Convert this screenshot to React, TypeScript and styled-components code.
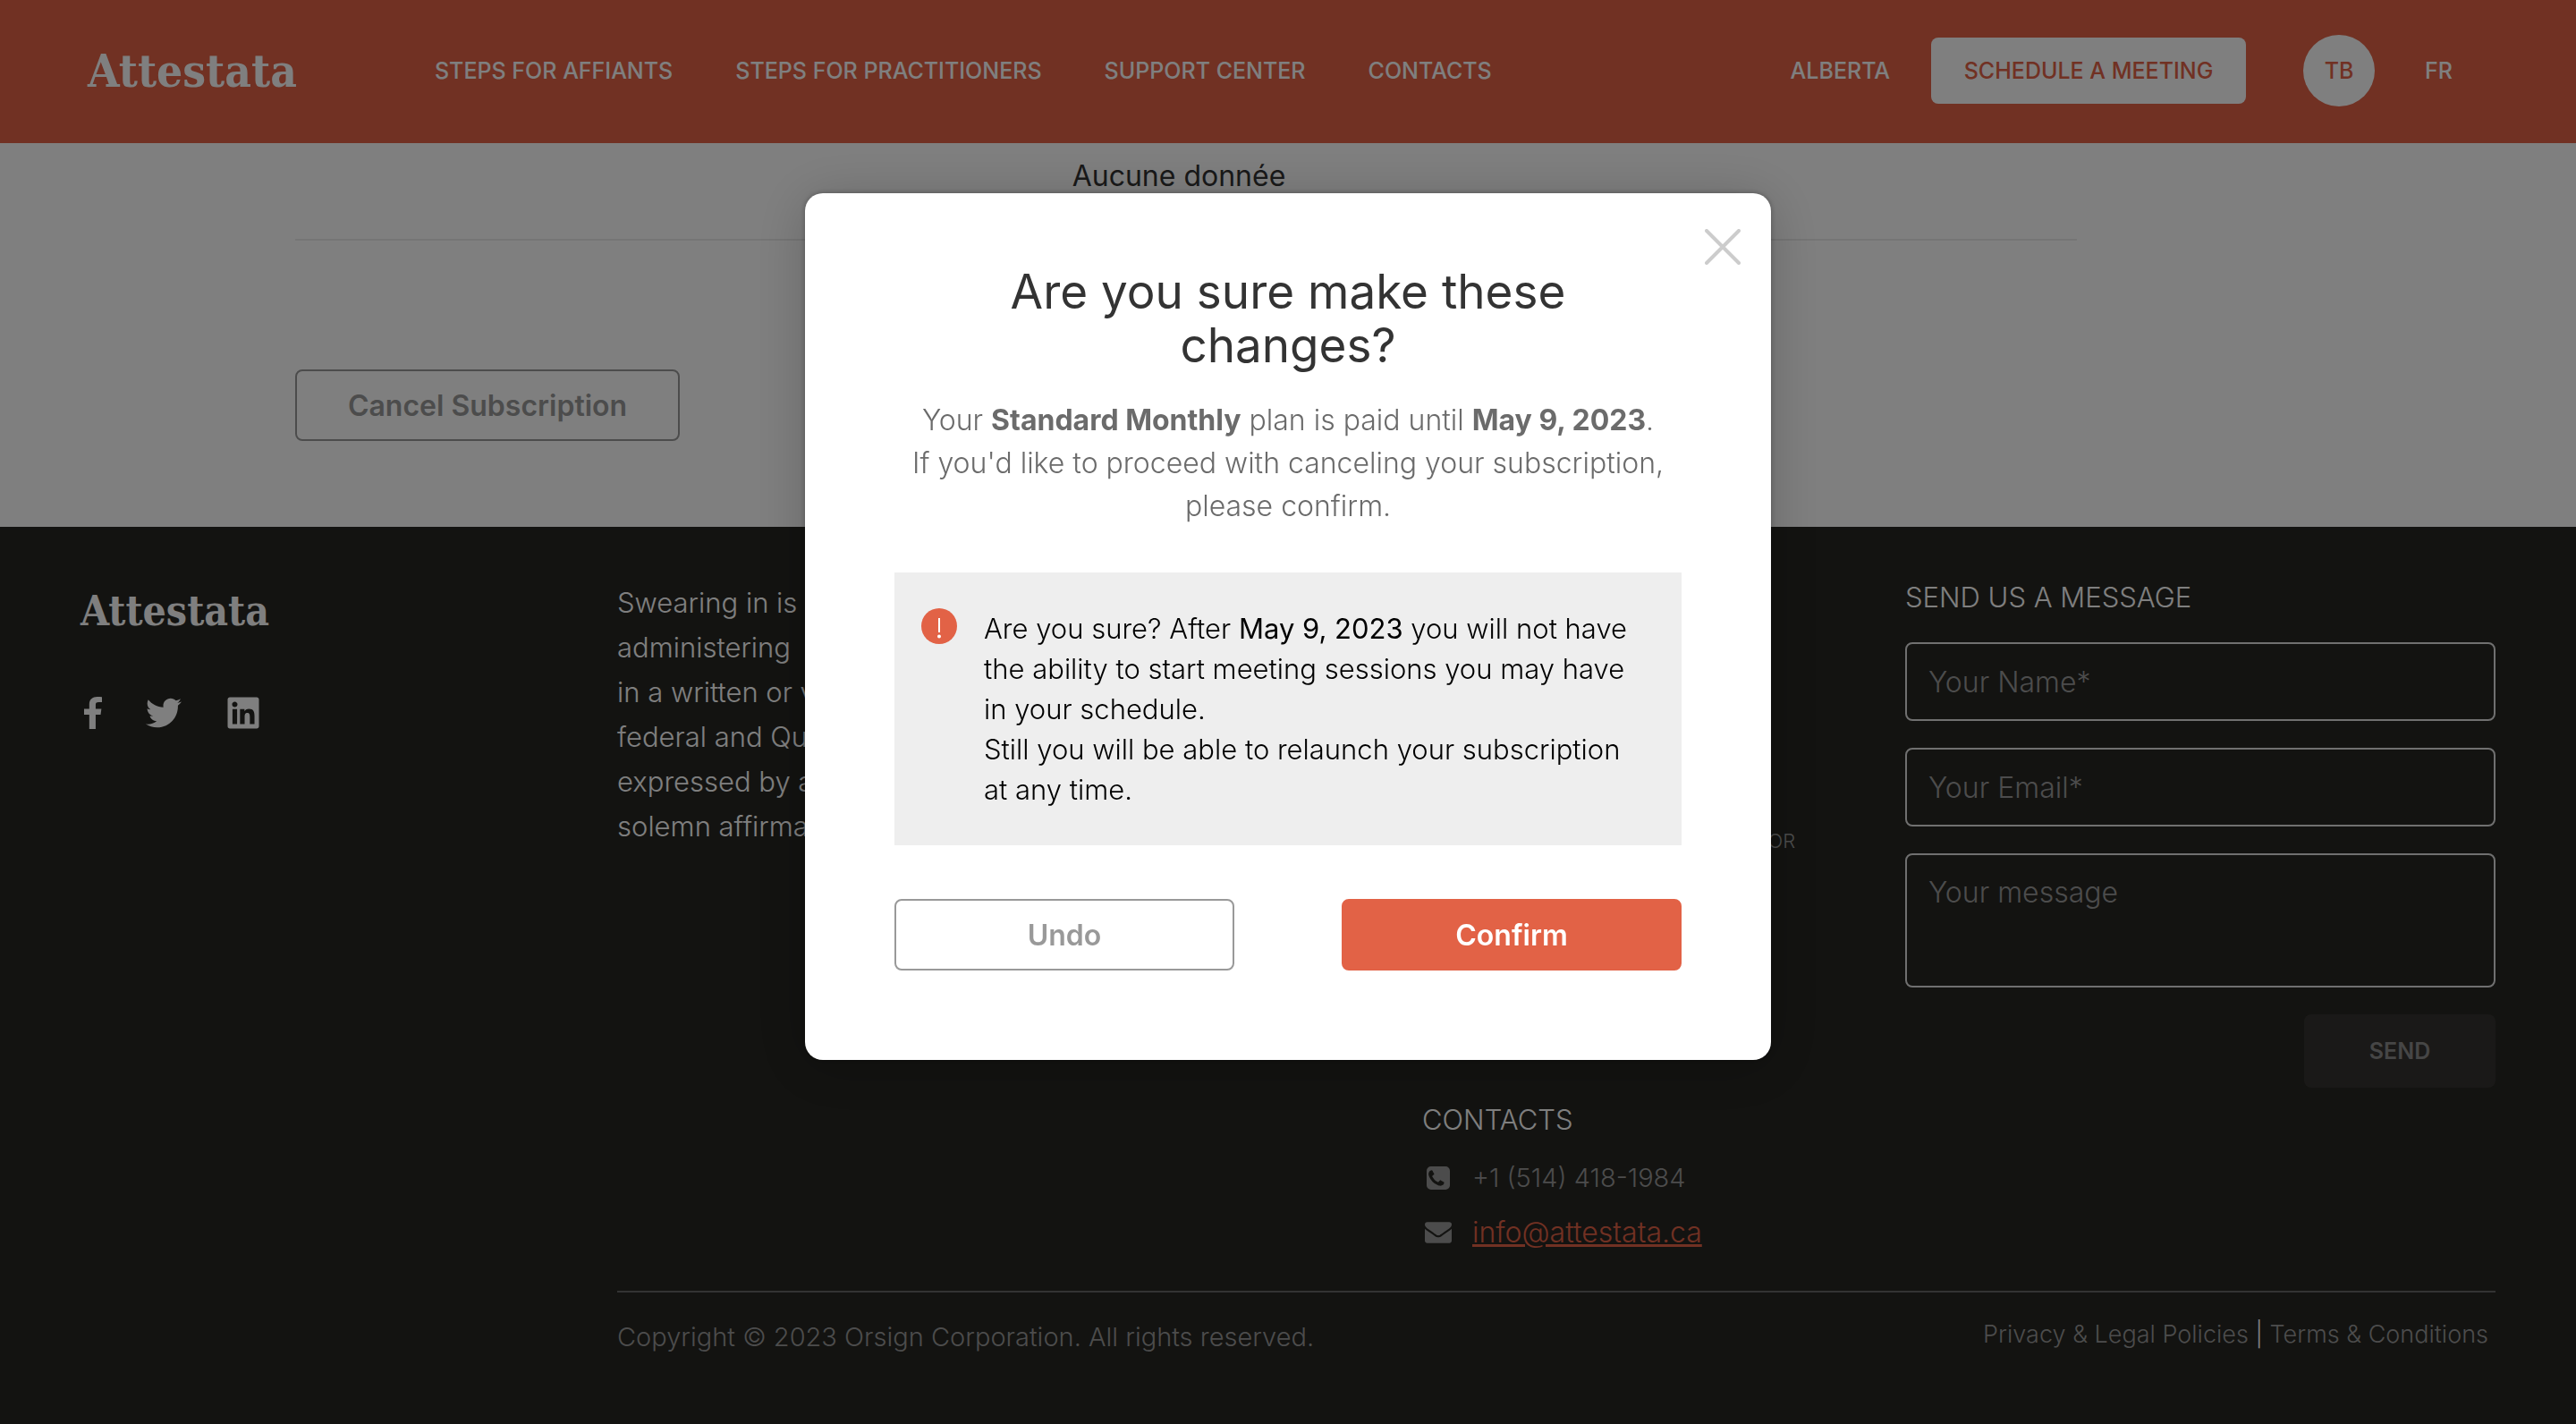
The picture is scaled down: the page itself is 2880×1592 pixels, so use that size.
import React from "react";
import styled, { createGlobalStyle } from "styled-components";
import { FaTwitter, FaLinkedin } from "react-icons/fa";

const GlobalStyle = createGlobalStyle`
  *, *::before, *::after { box-sizing: border-box; }
  body {
    margin: 0;
    background: #fff;
    color: #333;
    font-family: Inter, "Liberation Sans", sans-serif;
    font-size: 32px;
    font-weight: 400;
  }
  button, input, textarea { font: inherit; }
  h1, h2, p, ul { margin: 0; padding: 0; }
`;

const accent = "#e26246";

const Page = styled.div`
  display: flex;
  flex-direction: column;
  min-height: 100vh;
`;

const Header = styled.header`
  display: flex;
  align-items: center;
  height: 160px;
  padding: 0 138px 2px 98px;
  background: ${accent};
  color: #fff;
`;

const Logo = styled.a<{ $size: number }>`
  font-family: "DejaVu Serif Condensed", "DejaVu Serif", serif;
  font-size: ${(p) => p.$size}px;
  font-weight: 700;
  line-height: 60px;
  color: #fff;
  text-decoration: none;
`;

const Nav = styled.nav`
  display: flex;
  gap: 70px;
  margin-left: 154px;
`;

const HeaderLink = styled.a`
  font-size: 25px;
  font-weight: 500;
  line-height: 32px;
  color: #fff;
  text-decoration: none;
  white-space: nowrap;
`;

const HeaderActions = styled.div`
  display: flex;
  align-items: center;
  margin-left: auto;
`;

const MeetingButton = styled.button`
  width: 352px;
  height: 74px;
  margin: 0 64px 0 46px;
  padding: 0;
  border: 0;
  border-radius: 8px;
  background: #fff;
  color: ${accent};
  font-size: 25px;
  font-weight: 500;
  white-space: nowrap;
`;

const Avatar = styled.button`
  width: 80px;
  height: 80px;
  margin-right: 56px;
  padding: 0;
  border: 0;
  border-radius: 50%;
  background: #fff;
  color: ${accent};
  font-size: 25px;
  font-weight: 500;
`;

const Content = styled.main`
  padding: 0 558px 96px 330px;
`;

const DataTable = styled.table`
  width: 100%;
  margin-bottom: 144px;
  border-collapse: collapse;
`;

const EmptyCell = styled.td`
  height: 108px;
  padding: 16px 16px 0 0;
  border-bottom: 2px solid #ebebeb;
  line-height: 42px;
  text-align: center;
  vertical-align: top;
`;

const ActionButton = styled.button<{ $width: number; $filled?: boolean }>`
  width: ${(p) => p.$width}px;
  height: 80px;
  padding: 0;
  border: 2px solid ${(p) => (p.$filled ? accent : "#999")};
  border-radius: 8px;
  background: ${(p) => (p.$filled ? accent : "transparent")};
  color: ${(p) => (p.$filled ? "#fff" : "#999")};
  font-size: 32px;
  font-weight: 600;
`;

const Footer = styled.footer`
  display: grid;
  flex: 1;
  grid-template-columns: 600fr 2100fr;
  padding: 60px 90px;
  background: #262622;
  color: #fff;
`;

const Brand = styled.div`
  display: flex;
  flex-direction: column;
  align-items: flex-start;
  gap: 64px;
  padding-top: 4px;
`;

const SocialLinks = styled.div`
  display: flex;
  align-items: center;
  gap: 49px;
  height: 40px;
  padding-left: 4px;
`;

const SocialLink = styled.a`
  display: flex;
  color: #fff;
  font-size: 40px;
`;

const FooterColumns = styled.div`
  display: grid;
  grid-template-columns: 900fr 540fr 660fr;
  min-height: 796px;
  border-bottom: 2px solid #666;
`;

const About = styled.p`
  font-size: 31px;
  font-weight: 300;
  line-height: 50px;
`;

const Line = styled.span`
  display: block;
  white-space: nowrap;
`;

const LinksColumn = styled.div`
  display: flex;
  flex-direction: column;
  justify-content: space-between;
  padding-bottom: 35px;
`;

const FooterHeading = styled.h2`
  font-size: 31px;
  font-weight: 300;
  line-height: 38px;
`;

const FooterMenu = styled.ul`
  display: flex;
  flex-direction: column;
  gap: 36px;
  padding-top: 33px;
  list-style: none;
`;

const MenuLink = styled.a`
  display: block;
  font-size: 22px;
  font-weight: 300;
  line-height: 32px;
  color: #999;
  text-decoration: none;
  white-space: nowrap;
`;

const ContactsHeading = styled(FooterHeading)`
  margin-bottom: 15px;
`;

const ContactRow = styled.div`
  display: flex;
  align-items: center;
  gap: 23px;
  height: 61px;
  padding-left: 3px;
  color: #999;
  font-weight: 300;
`;

const ContactIcon = styled.span`
  display: flex;
  justify-content: center;
  width: 30px;
`;

const PhoneNumber = styled.span`
  font-size: 29px;
`;

const MailLink = styled.a`
  color: ${accent};
  text-decoration-thickness: 3px;
`;

const Form = styled.form`
  display: flex;
  flex-direction: column;
  gap: 30px;
`;

const FormHeading = styled(FooterHeading)`
  margin-bottom: 1px;
`;

const Field = styled.input`
  display: block;
  width: 100%;
  height: 88px;
  padding: 0 24px;
  border: 2px solid #e0e0e0;
  border-radius: 8px;
  background: transparent;
  color: #fff;
  font-size: 32px;
  font-weight: 300;

  &::placeholder { color: #999; opacity: 1; }
`;

const MessageField = styled(Field)`
  height: 150px;
  padding: 22px 24px;
  line-height: 40px;
  resize: none;
`;

const SendButton = styled.button`
  align-self: flex-end;
  width: 214px;
  height: 82px;
  padding: 0;
  border: 0;
  border-radius: 8px;
  background: #353330;
  color: #8c8c8c;
  font-size: 25px;
  font-weight: 600;
`;

const Legal = styled.div`
  display: flex;
  justify-content: space-between;
  align-items: flex-start;
  padding: 28px 8px 0 0;
  color: #999;
`;

const Copyright = styled.p`
  font-size: 29px;
  font-weight: 300;
  line-height: 44px;
`;

const LegalLinks = styled.p`
  font-size: 27px;
  font-weight: 300;
  line-height: 38px;
`;

const LegalLink = styled.a`
  color: #999;
  text-decoration: none;
`;

const Divider = styled.span`
  color: #fff;
`;

const Overlay = styled.div`
  position: fixed;
  inset: 0;
  display: flex;
  justify-content: center;
  align-items: flex-start;
  padding-top: 216px;
  background: rgba(0, 0, 0, 0.5);
`;

const Modal = styled.section`
  position: relative;
  width: 1080px;
  padding: 80px 100px 100px;
  border-radius: 20px;
  background: #fff;
  box-shadow: 0 6px 60px rgba(0, 0, 0, 0.2), 0 0 6px rgba(0, 0, 0, 0.3);
`;

const CloseButton = styled.button`
  position: absolute;
  top: 40px;
  right: 34px;
  display: flex;
  padding: 0;
  border: 0;
  background: none;
  color: #ccc;
`;

const ModalTitle = styled.h1`
  padding: 0 60px;
  font-size: 53px;
  font-weight: 400;
  line-height: 60px;
  text-align: center;
`;

const ModalText = styled.p`
  margin: 30px 0 50px;
  color: #6b6b6b;
  font-size: 32px;
  font-weight: 300;
  line-height: 48px;
  text-align: center;

  strong { font-weight: 700; }
`;

const Notice = styled.div`
  display: flex;
  align-items: flex-start;
  gap: 30px;
  padding: 40px 30px;
  background: #eee;
  color: #000;

  svg { flex: none; }
`;

const NoticeText = styled.p`
  padding-right: 14px;
  font-size: 31px;
  font-weight: 300;
  line-height: 45px;

  strong { font-weight: 400; }
`;

const ModalActions = styled.div`
  display: flex;
  justify-content: space-between;
  margin-top: 60px;
`;

const FacebookIcon = () => (
  <svg width="20" height="36" viewBox="0 0 264 512" preserveAspectRatio="none" fill="currentColor" aria-hidden="true">
    <path d="M76.700 512V283H0v-91h76.700v-71.700C76.700 42.400 124.300 0 193.800 0c33.300 0 61.900 2.500 70.200 3.600V85h-48.200c-37.800 0-45.100 18-45.100 44.300V192H256l-11.700 91h-73.600v229" />
  </svg>
);

const PhoneIcon = () => (
  <svg width="26" height="26" viewBox="128 128 1536 1536" fill="currentColor" aria-hidden="true">
    <path d="M1280 1193q0-11-2-16-3-8-38.500-29.500t-88.500-49.500l-53-29q-5-3-19-13t-25-15-21-5q-18 0-47 32.500t-57 65.500-44 33q-7 0-16.500-3.500t-15.500-6.500-17-9.500-14-8.500q-99-55-170.500-126.500t-126.500-170.500q-2-3-8.500-14t-9.500-17-6.500-15.500-3.500-16.500q0-13 20.500-33.500t45-38.500 45-39.500 20.500-36.500q0-10-5-21t-15-25-13-19q-3-6-15-28.500t-25-45.500-26.500-47.500-25-40.500-16.500-18-16-2q-48 0-101 22-46 21-80 94.500t-34 130.500q0 16 2.500 34t5 30.500 9 33 10 29.500 12.500 33 11 30q60 164 216.500 320.500t320.500 216.500q6 2 30 11t33 12.500 29.500 10 33 9 30.500 5 34 2.500q57 0 130.500-34t94.500-80q22-53 22-101zm384-777v960q0 119-84.500 203.500t-203.500 84.500h-960q-119 0-203.500-84.500t-84.500-203.500v-960q0-119 84.500-203.500t203.500-84.500h960q119 0 203.500 84.500t84.500 203.500z" />
  </svg>
);

const EnvelopeIcon = () => (
  <svg width="30" height="24" viewBox="0 256 1792 1408" fill="currentColor" aria-hidden="true">
    <path d="M1792 710v794q0 66-47 113t-113 47h-1472q-66 0-113-47t-47-113v-794q44 49 101 87 362 246 497 345 57 42 92.500 65.500t94.500 48 110 24.500h2q51 0 110-24.500t94.500-48 92.500-65.500q170-123 498-345 57-39 100-87zm0-294q0 79-49 151t-122 123q-376 261-468 325-10 7-42.500 31t-54 38.500-52 32.500-57.500 27-50 9h-2q-23 0-50-9t-57.500-27-52-32.500-54-38.500-42.500-31q-91-64-262-182.500t-205-142.500q-62-42-117-115.500t-55-136.500q0-78 41.500-130t118.500-52h1472q65 0 112.500 47t47.500 113z" />
  </svg>
);

const navItems = ["STEPS FOR AFFIANTS", "STEPS FOR PRACTITIONERS", "SUPPORT CENTER", "CONTACTS"];

const aboutLines = [
  "Swearing in is conducted when",
  "administering",
  "in a written or verbal statement under",
  "federal and Quebec laws, and",
  "expressed by an individual taking a",
  "solemn affirmation of the facts.",
];

const menuItems = ["HOW IT WORKS", "STEPS FOR AFFIANTS", "STEPS FOR PRACTITIONERS", "BECOME AN ONTARIO ADMINISTRATOR"];

export default function App() {
  return (
    <>
      <GlobalStyle />
      <Page>
        <Header>
          <Logo href="#" $size={51}>Attestata</Logo>
          <Nav>
            {navItems.map((item) => (
              <HeaderLink key={item} href="#">{item}</HeaderLink>
            ))}
          </Nav>
          <HeaderActions>
            <HeaderLink href="#">ALBERTA</HeaderLink>
            <MeetingButton type="button">SCHEDULE A MEETING</MeetingButton>
            <Avatar type="button">TB</Avatar>
            <HeaderLink href="#">FR</HeaderLink>
          </HeaderActions>
        </Header>

        <Content>
          <DataTable>
            <tbody>
              <tr>
                <EmptyCell>Aucune donnée</EmptyCell>
              </tr>
            </tbody>
          </DataTable>
          <ActionButton type="button" $width={430}>Cancel Subscription</ActionButton>
        </Content>

        <Footer>
          <Brand>
            <Logo href="#" $size={46}>Attestata</Logo>
            <SocialLinks>
              <SocialLink href="#" aria-label="Facebook"><FacebookIcon /></SocialLink>
              <SocialLink href="#" aria-label="Twitter"><FaTwitter /></SocialLink>
              <SocialLink href="#" aria-label="LinkedIn"><FaLinkedin /></SocialLink>
            </SocialLinks>
          </Brand>
          <div>
            <FooterColumns>
              <About>
                {aboutLines.map((line) => (
                  <Line key={line}>{line}</Line>
                ))}
              </About>
              <LinksColumn>
                <div>
                  <FooterHeading>NAVIGATION</FooterHeading>
                  <FooterMenu>
                    {menuItems.map((item) => (
                      <li key={item}><MenuLink href="#">{item}</MenuLink></li>
                    ))}
                  </FooterMenu>
                </div>
                <div>
                  <ContactsHeading>CONTACTS</ContactsHeading>
                  <ContactRow>
                    <ContactIcon><PhoneIcon /></ContactIcon>
                    <PhoneNumber>+1 (514) 418-1984</PhoneNumber>
                  </ContactRow>
                  <ContactRow>
                    <ContactIcon><EnvelopeIcon /></ContactIcon>
                    <MailLink href="mailto:info@attestata.ca">info@attestata.ca</MailLink>
                  </ContactRow>
                </div>
              </LinksColumn>
              <Form>
                <FormHeading>SEND US A MESSAGE</FormHeading>
                <Field type="text" aria-label="Your Name" placeholder="Your Name*" />
                <Field type="email" aria-label="Your Email" placeholder="Your Email*" />
                <MessageField as="textarea" aria-label="Your message" placeholder="Your message" />
                <SendButton type="button">SEND</SendButton>
              </Form>
            </FooterColumns>
            <Legal>
              <Copyright>Copyright © 2023 Orsign Corporation. All rights reserved.</Copyright>
              <LegalLinks>
                <LegalLink href="#">Privacy &amp; Legal Policies</LegalLink>
                <Divider> | </Divider>
                <LegalLink href="#">Terms &amp; Conditions</LegalLink>
              </LegalLinks>
            </Legal>
          </div>
        </Footer>
      </Page>

      <Overlay>
        <Modal role="dialog" aria-modal="true" aria-labelledby="dialog-title">
          <CloseButton type="button" aria-label="Close">
            <svg width="40" height="40" viewBox="0 0 40 40" fill="none" stroke="currentColor" strokeWidth="4" strokeLinecap="round">
              <path d="M2 2L38 38M38 2L2 38" />
            </svg>
          </CloseButton>
          <ModalTitle id="dialog-title">Are you sure make these changes?</ModalTitle>
          <ModalText>
            Your <strong>Standard Monthly</strong> plan is paid until <strong>May 9, 2023</strong>.
            <br />
            If you'd like to proceed with canceling your subscription, please confirm.
          </ModalText>
          <Notice>
            <svg width="40" height="40" viewBox="0 0 40 40" aria-hidden="true">
              <circle cx="20" cy="20" r="20" fill={accent} />
              <path d="M20 11V27" stroke="#fff" strokeWidth="2" />
              <circle cx="20" cy="31.5" r="2" fill="#fff" />
            </svg>
            <NoticeText>
              Are you sure? After <strong>May 9, 2023</strong> you will not have the ability to start meeting sessions you may have in your schedule.
              <br />
              Still you will be able to relaunch your subscription at any time.
            </NoticeText>
          </Notice>
          <ModalActions>
            <ActionButton type="button" $width={380}>Undo</ActionButton>
            <ActionButton type="button" $width={380} $filled>Confirm</ActionButton>
          </ModalActions>
        </Modal>
      </Overlay>
    </>
  );
}
